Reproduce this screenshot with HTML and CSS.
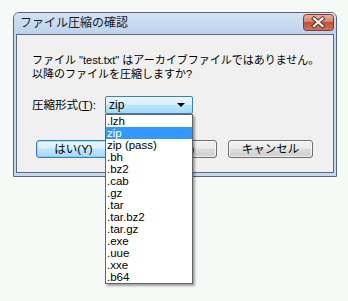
FILE: index.html
```html
<!DOCTYPE html>
<html lang="ja">
<head>
<meta charset="utf-8">
<title>ファイル圧縮の確認</title>
<link rel="stylesheet" href="styles.css">
</head>
<body>
<div class="page">
<div class="dialog">
  <div class="titlebar">
    <span class="title">ファイル圧縮の確認</span>
    <span class="close">
      <svg width="31" height="17" viewBox="0 0 31 17">
        <defs>
          <linearGradient id="cg" x1="0" y1="0" x2="0" y2="1">
            <stop offset="0" stop-color="#e9b5a6"/>
            <stop offset="0.45" stop-color="#d7826c"/>
            <stop offset="0.5" stop-color="#c4513a"/>
            <stop offset="1" stop-color="#d2735c"/>
          </linearGradient>
        </defs>
        <rect x="0.5" y="0.5" width="30" height="16" rx="3" fill="url(#cg)" stroke="#7d3a30"/>
        <path d="M11 4.5 L19.5 12 M19.5 4.5 L11 12" stroke="#5a2a22" stroke-width="4" stroke-linecap="square"/>
        <path d="M11 4.5 L19.5 12 M19.5 4.5 L11 12" stroke="#ffffff" stroke-width="2.2" stroke-linecap="square"/>
      </svg>
    </span>
  </div>
  <div class="client">
    <p class="message">ファイル "test.txt" はアーカイブファイルではありません。<br>以降のファイルを圧縮しますか?</p>
    <div class="form-row">
      <span class="label">圧縮形式(<u>T</u>):</span>
      <div class="combo">
        <span class="combo-value">zip</span>
        <span class="arrow"></span>
        <ul class="list">
          <li>.lzh</li>
          <li class="selected">zip</li>
          <li>zip (pass)</li>
          <li>.bh</li>
          <li>.bz2</li>
          <li>.cab</li>
          <li>.gz</li>
          <li>.tar</li>
          <li>.tar.bz2</li>
          <li>.tar.gz</li>
          <li>.exe</li>
          <li>.uue</li>
          <li>.xxe</li>
          <li>.b64</li>
        </ul>
      </div>
    </div>
    <div class="buttons">
      <span class="btn btn-default btn-yes">はい(Y)</span>
      <span class="btn btn-no">いいえ(N)</span>
      <span class="btn btn-cancel">キャンセル</span>
    </div>
  </div>
</div>
</div>
</body>
</html>
```

FILE: styles.css
```css
* {
  box-sizing: border-box;
}

html,
body {
  margin: 0;
  padding: 0;
  background: #f6faf7;
}

body {
  font-family: "Liberation Sans", "Noto Sans CJK JP", sans-serif;
  font-size: 12px;
  color: #000;
}

.page {
  min-height: 301px;
  padding: 12px 0 0 13px;
}

.dialog {
  width: 324px;
  border: 1px solid #56657a;
  border-radius: 6px 6px 0 0;
  background: #c6d9ef;
  padding: 0 2px 3px 2px;
}

.titlebar {
  height: 21px;
  display: flex;
  align-items: flex-start;
  justify-content: space-between;
  background: linear-gradient(#d3e2f4, #bdd2ec);
  margin: 0 -2px;
  padding: 0 2px 0 6px;
  border-radius: 5px 5px 0 0;
}

.title {
  line-height: 20px;
  font-size: 12px;
  color: #1a1a1a;
}

.close {
  display: block;
  width: 31px;
  height: 17px;
  margin-top: 1px;
}

.close svg {
  display: block;
}

.client {
  border: 1px solid #5b6c80;
  background: #f0f0f0;
  padding: 18px 0 14px 15px;
}

.message {
  margin: 0;
  font-size: 11px;
  line-height: 14px;
  white-space: nowrap;
}

.form-row {
  margin-top: 15px;
  display: flex;
  align-items: center;
  height: 18px;
}

.label {
  width: 73px;
  font-size: 11.5px;
  line-height: 14px;
}

.label u {
  text-decoration: underline;
}

.combo {
  position: relative;
  width: 88px;
  height: 18px;
  border: 1px solid #3c7fb1;
  border-radius: 2px;
  background: linear-gradient(#eaf6fd 0%, #d9f0fc 45%, #bee6fd 50%, #a7d9f5 100%);
  display: flex;
  align-items: center;
  padding-left: 3px;
}

.combo-value {
  flex: 1;
  line-height: 14px;
}

.arrow {
  width: 0;
  height: 0;
  border-left: 4px solid transparent;
  border-right: 4px solid transparent;
  border-top: 4px solid #000;
  margin-right: 7px;
}

.list {
  position: absolute;
  top: 17px;
  left: -1px;
  width: 88px;
  margin: 0;
  padding: 0;
  list-style: none;
  background: #fff;
  border: 1px solid #646464;
  box-shadow: 2px 2px 2px rgba(0, 0, 0, 0.35);
  z-index: 2;
}

.list li {
  display: block;
  height: 12px;
  line-height: 12px;
  font-size: 11.5px;
  padding-left: 1px;
  white-space: nowrap;
}

.list li.selected {
  background: #3399ff;
  color: #fff;
}

.buttons {
  margin-top: 26px;
  margin-left: 4px;
  display: flex;
  gap: 10px;
}

.btn {
  height: 18px;
  display: flex;
  align-items: center;
  justify-content: center;
  font-size: 11.5px;
  line-height: 14px;
  border: 1px solid #707070;
  border-radius: 3px;
  background: linear-gradient(#f2f2f2 0%, #ebebeb 45%, #dddddd 50%, #cfcfcf 100%);
  box-shadow: inset 0 0 0 1px rgba(255, 255, 255, 0.6);
}

.btn-default {
  border-color: #3c7fb1;
  background: linear-gradient(#eaf6fd 0%, #d9f0fc 45%, #bee6fd 50%, #a7d9f5 100%);
  box-shadow: inset 0 0 0 1px rgba(120, 200, 240, 0.6);
}

.btn-yes {
  width: 75px;
}

.btn-no {
  width: 96px;
}

.btn-cancel {
  width: 85px;
  margin-left: 1px;
}
```
